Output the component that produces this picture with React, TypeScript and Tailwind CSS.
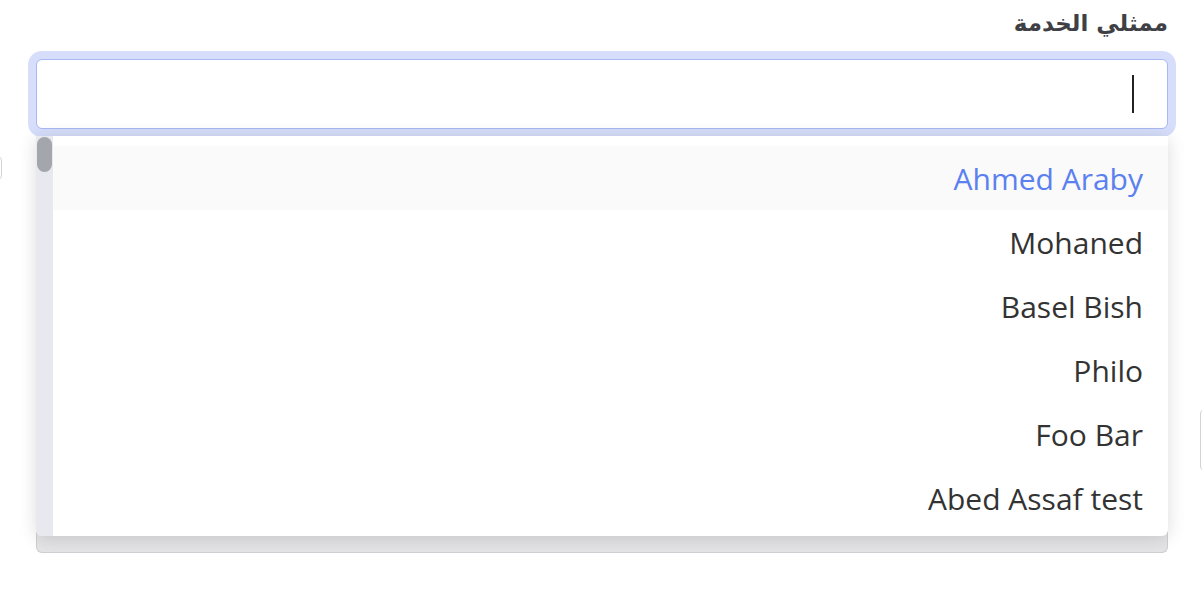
import { useState } from "react";

const agents = [
  "Ahmed Araby",
  "Mohaned",
  "Basel Bish",
  "Philo",
  "Foo Bar",
  "Abed Assaf test",
];

export default function App() {
  const [active, setActive] = useState(0);

  return (
    <div className="relative h-[594px] w-full overflow-hidden bg-white">
      {/* bits of neighbouring fields peeking out at the edges */}
      <div className="absolute left-[-20px] top-[155px] h-[26px] w-[22px] rounded-md border border-[#d4d4d8] bg-white" />
      <div className="absolute right-[-20px] top-[408px] h-[64px] w-[22px] rounded-md border border-[#d4d4d8] bg-white" />

      <div className="pl-[36px] pr-[34px] pt-[8px]">
        <label
          dir="rtl"
          className="block text-right text-[23px] font-bold leading-[30px] text-[#3f3f46]"
          style={{ fontFamily: '"DejaVu Sans", "Noto Sans", sans-serif' }}
        >
          ممثلي الخدمة
        </label>

        <div className="relative mt-[21px]">
          {/* input with focus ring */}
          <div className="relative h-[70px] rounded-[6px] border-[1.5px] border-[#a7b8f5] bg-white shadow-[0_0_0_8px_#d6defb]">
            <span className="absolute right-[33px] top-[15px] h-[38px] w-[2px] bg-[#222]" />
          </div>

          {/* field underneath the open menu */}
          <div className="mt-[4px] h-[420px] rounded-b-[6px] border border-t-0 border-[#cfcfd3] bg-[#e4e4e6]" />

          {/* dropdown */}
          <div
            dir="ltr"
            className="absolute left-0 right-0 top-[77px] flex h-[400px] overflow-hidden rounded-b-[6px] bg-white shadow-[0_2px_18px_rgba(0,0,0,0.14)]"
          >
            <div className="w-[17px] shrink-0 bg-[#e8e9ee] pl-[1px] pr-[1px] pt-[1px]">
              <div className="h-[35px] w-full rounded-full bg-[#a3a6ab]" />
            </div>
            <ul
              className="flex-1 pt-[10px] text-right"
              style={{ fontFamily: '"Open Sans", "Liberation Sans", sans-serif' }}
            >
              {agents.map((name, i) => (
                <li
                  key={name}
                  onMouseEnter={() => setActive(i)}
                  className={
                    i === active
                      ? "flex h-[64px] cursor-pointer items-center justify-end bg-[#fafafa] pr-[25px] text-[30px] text-[#5b80f0]"
                      : "flex h-[64px] cursor-pointer items-center justify-end pr-[25px] text-[30px] text-[#333333]"
                  }
                >
                  {name}
                </li>
              ))}
            </ul>
          </div>
        </div>
      </div>
    </div>
  );
}
